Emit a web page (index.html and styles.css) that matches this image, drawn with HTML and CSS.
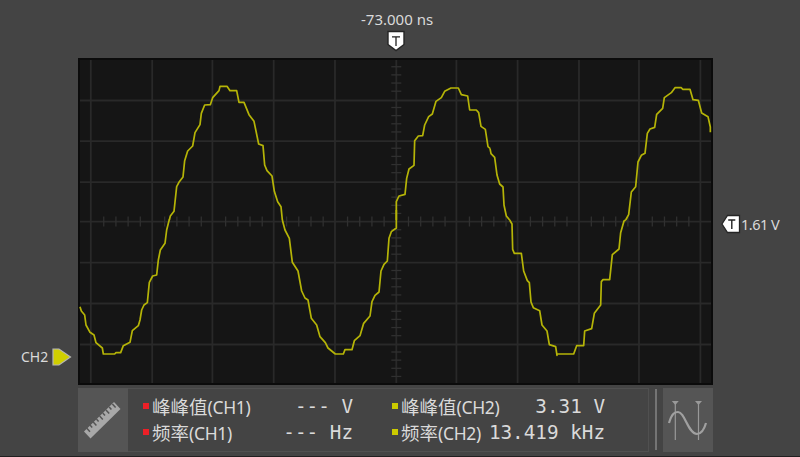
FILE: index.html
```html
<!DOCTYPE html>
<html lang="zh-CN">
<head>
<meta charset="utf-8">
<title>Oscilloscope</title>
<link rel="stylesheet" href="styles.css">
</head>
<body>
<main class="scope">
  <header class="trigger-time">
    <span class="time-value">-73.000 ns</span>
    <svg class="time-flag" width="20" height="22" viewBox="0 0 20 22"><path d="M2 1.5H18V14.5L10 20.5L2 14.5Z" fill="#fff" stroke="#252525" stroke-width="1.4"/><path d="M6 6.8H14M10 6.8V16" stroke="#222" stroke-width="1.3" fill="none"/></svg>
  </header>
  <section class="middle">
    <aside class="channel"><span>CH2</span><svg width="20" height="18" viewBox="0 0 20 18"><path d="M1 1H7L18.5 9L7 17H1Z" fill="#d0cf00" stroke="#b5b5b5" stroke-width="1.2"/></svg></aside>
    <svg class="plot" width="635" height="327" viewBox="0 0 635 327">
      <rect width="635" height="327" fill="#0b0b0b"/>
      <rect x="2" y="2" width="631" height="323" fill="#151515"/>
      <path class="grid" d="M12.8 2V325M74.2 2V325M134.4 2V325M195.7 2V325M257 2V325M318.3 2V325M378.4 2V325M439.6 2V325M501 2V325M561 2V325M622.4 2V325M2 42.5H633M2 83.2H633M2 124.2H633M2 163.6H633M2 204.6H633M2 245.5H633M2 286.5H633"/>
      <g id="ticks" class="ticks"></g>
      <g class="wave">
        <path transform="translate(-8 152) scale(.33333)" d="M30 290L34 303 44 315 48 345 60 367 72 375 78 398 97 414 100 432H134L138 428H152L160 407 180 397 187 362 205 347 210 330 215 300 222 285 232 278 238 217 248 198 260 195 265 150 271 120 285 100 290 60 298 28"/>
        <path transform="translate(-8 -8) scale(.33333)" d="M298 510L301 498 312 484 320 410 328 395 339 381 344 332 353 303 368 288 375 248 390 224 394 190 404 165 421 164 428 143 447 122 450 109H471L480 122H500L507 157H522L537 194 552 214 566 282 579 287 584 345 591 362 606 378 613 424 623 455 633 470 637 510"/>
        <path transform="translate(202 152) scale(.33333)" d="M7 30L15 60 28 85 37 157 54 183 65 243 75 264 84 270 94 325 110 345 120 380 136 398 144 414 166 432H190L195 419H216L223 392 240 377 251 340 270 318 276 275 285 256 297 246 303 183 312 163 322 153 327 85 334 65 349 54V0"/>
        <path transform="translate(202 -8) scale(.33333)" d="M349 510V455L357 438 375 433 380 385 387 357 402 346 404 272 415 258 428 257 434 225 446 200 457 192 468 154 484 143 494 124 513 114H535L544 134 563 138 569 180H589L596 188 603 229 616 238 624 290 630 295"/>
        <path transform="translate(412 -8) scale(.33333)" d="M0 295L3 311 14 322 21 375 29 402 39 411 42 465 49 498 59 510"/>
        <path transform="translate(412 152) scale(.33333)" d="M59 30L66 42 68 118 73 130H94L101 183 112 212 118 218 123 276 130 293 149 302 156 345 171 363 178 404 197 410 201 436V432H251L260 407H281L284 363 305 356 313 310 332 285 334 215 339 209H359L367 134 387 117 392 68 402 33 407 30"/>
        <path transform="translate(412 -8) scale(.33333)" d="M407 510L416 494 424 426 437 410 444 336 454 316 465 310 472 250 480 237 494 232 500 193 518 175 523 143 544 128 555 113H574L578 118H600L609 149 625 151 635 189 654 200 661 231V247"/>
      </g>
    </svg>
    <aside class="level"><svg width="20" height="20" viewBox="0 0 20 20"><path d="M1 10L6.5 1.5H18.5V18.5H6.5Z" fill="#fff" stroke="#252525" stroke-width="1.3"/><path d="M7.2 6H14.3M10.8 6V15" stroke="#222" stroke-width="1.4"/></svg><span>1.61 V</span></aside>
  </section>
  <footer class="measurements">
    <div class="tile"><svg width="50" height="64" viewBox="0 0 50 64"><path d="M6 43.5L12.5 50.5L42.5 21L36 14Z" fill="#a8a8a8"/><path d="M8.8 40.2L12 43.7M12 37L14.2 39.5M15.2 34L18.4 37.5M18.4 31L20.6 33.5M21.6 28L24.8 31.5M24.8 25L27 27.5M28 22L31.2 25.5M31.2 19L33.4 21.5M34.4 16L37.6 19.5" stroke="#555" stroke-width="1.5"/></svg></div>
    <div class="readings">
      <div class="row ch1"><i></i><span class="label">峰峰值<b>(CH1)</b></span><span class="value">--- V</span></div>
      <div class="row ch2"><i></i><span class="label">峰峰值<b>(CH2)</b></span><span class="value">3.31 V</span></div>
      <div class="row ch1"><i></i><span class="label">频率<b>(CH1)</b></span><span class="value">--- Hz</span></div>
      <div class="row ch2"><i></i><span class="label">频率<b>(CH2)</b></span><span class="value">13.419 kHz</span></div>
    </div>
    <div class="divider"></div>
    <div class="tile"><svg width="50" height="64" viewBox="0 0 50 64"><path d="M12.3 14V52M35.5 14V52" stroke="#999" stroke-width="1.2"/><path d="M8.8 13H15.8L12.3 17ZM32 13H39L35.5 17Z" fill="#999"/><path d="M6 35C9 25 12 24 15 24C22 24 25 46 34 46C38 46 41 42 43 35" fill="none" stroke="#a0a0a0" stroke-width="2.2"/></svg></div>
  </footer>
</main>
<script src="ticks.js"></script>
</body>
</html>
```
FILE: styles.css
```css
* { box-sizing: border-box; }
body { margin: 0; background: #444; color: #dadada; font-family: "Noto Sans", "Noto Sans CJK SC", sans-serif; }
.scope { width: 800px; height: 457px; display: flex; flex-direction: column; border-bottom: 1px solid #211f20; background: #444; }
.trigger-time { height: 58px; padding: 9px 0 0 361px; display: flex; flex-direction: column; align-items: flex-start; }
.time-value { font-size: 15px; line-height: 20px; white-space: nowrap; }
.time-flag { margin: 1px 0 0 25px; }
.middle { display: grid; grid-template-columns: 78px 635px 1fr; height: 327px; }
.channel { display: flex; align-items: center; height: 18px; margin: 290px 0 0 21px; font-size: 14px; gap: 4px; }
.channel span { margin-top: -2px; }
.channel svg { flex: none; }
.plot { display: block; }
.level { display: flex; align-items: center; height: 20px; margin: 156px 0 0 8px; font-size: 14.5px; white-space: nowrap; letter-spacing: -0.5px; }
.grid { fill: none; stroke: #292929; stroke-width: 1.8; }
.ticks { stroke: #303030; stroke-width: 1.3; }
.wave path { fill: none; stroke: #b5b407; stroke-width: 1.7; stroke-linejoin: round; vector-effect: non-scaling-stroke; }
.measurements { display: flex; width: 635px; height: 64px; margin: 3px 0 0 78px; }
.tile { width: 50px; background: #555; }
.tile svg { display: block; }
.readings { width: 522px; border: 1px solid #505050; border-left: 0; padding: 5px 0 0 15px; display: grid; grid-template-columns: 249px 213px; grid-template-rows: 26px 26px; }
.row { display: flex; align-items: center; white-space: nowrap; }
.row i { width: 6px; height: 6px; margin: 0 3px 3px 0; background: #ec2027; flex: none; }
.ch2 i { background: #cccb00; }
.label { font-size: 18.5px; line-height: 26px; }
.label b { font-weight: 400; font-size: 17.5px; letter-spacing: -0.35px; }
.value { margin-left: auto; font-family: "DejaVu Sans Mono", monospace; font-size: 19.3px; line-height: 26px; white-space: pre; }
.ch1 .value { margin-right: 39px; }
.divider { width: 2px; height: 61px; margin: 1px 6px 0 6px; background: #747474; }
```
FILE: ticks.js
```js
const ticks = document.getElementById('ticks');
const addTick = (d) => {
  const path = document.createElementNS('http://www.w3.org/2000/svg', 'path');
  path.setAttribute('d', d);
  ticks.appendChild(path);
};
for (let i = -25; i <= 25; i++) if (i % 5) addTick(`M${318.3 + i * 12.19} 158.5v10`);
for (let i = -19; i <= 19; i++) if (i % 5) addTick(`M313.3 ${163.6 + i * 8.15}h10`);
```
